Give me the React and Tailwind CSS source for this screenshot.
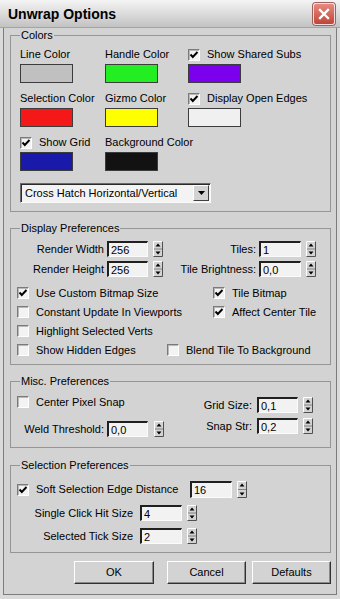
import React from "react";

function Spinner({ h = 16, className = "" }) {
  return (
    <svg width="10" height={h} viewBox={`0 0 10 ${h}`} className={"shrink-0 " + className}>
      <rect x="0" y="0" width="10" height={h} fill="#d3d3d3" />
      <path d={`M0.5 ${h - 0.5} V0.5 H9.5`} stroke="#ffffff" fill="none" />
      <path d={`M9.5 0.5 V${h - 0.5} H0.5`} stroke="#505050" fill="none" />
      <line x1="1" y1={h / 2} x2="9" y2={h / 2} stroke="#808080" />
      <path d="M5 2.5 L7.5 5.5 H2.5Z" fill="#000" />
      <path d={`M5 ${h - 2.5} L7.5 ${h - 5.5} H2.5Z`} fill="#000" />
    </svg>
  );
}

function Field({ value, className = "" }) {
  return (
    <div
      className={
        "shrink-0 flex items-center bg-[#f2f2f2] border-t-2 border-l-2 border-t-[#202020] border-l-[#202020] border-r border-b border-r-[#fbfbfb] border-b-[#fbfbfb] pl-[2px] leading-[12px] " +
        className
      }
    >
      {value}
    </div>
  );
}

function Check({ checked }) {
  return (
    <div className="w-[12px] h-[12px] shrink-0 bg-[#f3f3f3] border-t border-l border-t-[#7a7a7a] border-l-[#7a7a7a] border-r border-b border-r-[#ffffff] border-b-[#ffffff] shadow-[inset_1px_1px_0_#b8b8b8] flex items-center justify-center">
      {checked && (
        <svg width="10" height="10" viewBox="0 0 10 10">
          <path d="M1.5 4.5 L3.8 7 L8.5 2" stroke="#000" strokeWidth="1.9" fill="none" />
        </svg>
      )}
    </div>
  );
}

function CheckLabel({ checked, label, className = "" }) {
  return (
    <div className={"flex items-center gap-[7px] shrink-0 leading-[13px] " + className}>
      <Check checked={checked} />
      <span className="whitespace-nowrap">{label}</span>
    </div>
  );
}

function Swatch({ className }) {
  return <div className={"w-[53px] h-[19px] border border-[#3c3c3c] " + className} />;
}

function ColorCell({ label, swatch, check }) {
  return (
    <div className="flex flex-col gap-[3px]">
      <div className="h-[13px] flex items-center leading-[13px] whitespace-nowrap">
        {check !== undefined ? <CheckLabel checked={check} label={label} /> : label}
      </div>
      {swatch && <Swatch className={swatch} />}
    </div>
  );
}

function Button({ children, className = "" }) {
  return (
    <div
      className={
        "h-[23px] flex items-center justify-center bg-[#d3d3d3] border-t border-l border-t-[#ffffff] border-l-[#ffffff] border-r border-b border-r-[#303030] border-b-[#303030] shadow-[inset_-1px_-1px_0_#8a8a8a] " +
        className
      }
    >
      {children}
    </div>
  );
}

function Group({ title, className = "", children }) {
  return (
    <fieldset className={"ml-[6px] mr-[5px] border border-[#959595] min-w-0 " + className}>
      <legend className="ml-[9px] px-[1px] leading-[13px]">{title}</legend>
      {children}
    </fieldset>
  );
}

export default function App() {
  return (
    <div className="w-[340px] h-[599px] flex flex-col bg-[#dadada] font-['Liberation_Sans',Arial,sans-serif] text-[11px] text-black overflow-hidden">
      <div className="h-[28px] shrink-0 flex items-center justify-between pl-[8px] pr-[5px] bg-gradient-to-b from-[#f4f4f4] via-[#dcdcdc] to-[#c2c2c2] border-b border-[#a4a4a4]">
        <span className="font-bold text-[14px] leading-[16px]">Unwrap Options</span>
        <div className="w-[22px] h-[22px] rounded-[3px] border border-[#f4dcdc] bg-gradient-to-b from-[#e68a80] to-[#bf4438] flex items-center justify-center shadow-[0_0_0_1px_#a06060]">
          <svg width="12" height="12" viewBox="0 0 12 12">
            <path d="M2 2L10 10M10 2L2 10" stroke="#ffffff" strokeWidth="2.3" strokeLinecap="square" />
          </svg>
        </div>
      </div>

      <div className="flex-1 mx-[3px] mb-[4px] border-x border-b border-[#7c7c7c] bg-[#d3d3d3] flex flex-col">
        <Group title="Colors" className="mt-[1px]">
          <div className="pl-[9px] pt-[6px] pb-[8px]">
            <div className="grid grid-cols-[85px_83px_1fr] gap-y-[9px]">
              <ColorCell label="Line Color" swatch="bg-[#c0c0c0]" />
              <ColorCell label="Handle Color" swatch="bg-[#22ee22]" />
              <ColorCell label="Show Shared Subs" check={true} swatch="bg-[#7a00ee]" />
              <ColorCell label="Selection Color" swatch="bg-[#f41818]" />
              <ColorCell label="Gizmo Color" swatch="bg-[#ffff00]" />
              <ColorCell label="Display Open Edges" check={true} swatch="bg-[#f0f0f0]" />
              <ColorCell label="Show Grid" check={true} swatch="bg-[#1a1aaa]" />
              <ColorCell label="Background Color" swatch="bg-[#121212]" />
              <div />
            </div>
            <div className="mt-[12px] w-[191px] h-[20px] flex items-center bg-[#f3f3f3] border-t border-l border-t-[#6a6a6a] border-l-[#6a6a6a] border-r border-b border-r-[#fafafa] border-b-[#fafafa] shadow-[inset_1px_1px_0_#2a2a2a]">
              <span className="flex-1 pl-[4px] leading-[13px] whitespace-nowrap">Cross Hatch Horizontal/Vertical</span>
              <div className="w-[16px] h-[16px] mr-[1px] bg-[#d3d3d3] border-t border-l border-t-[#ffffff] border-l-[#ffffff] border-r border-b border-r-[#404040] border-b-[#404040] flex items-center justify-center">
                <svg width="7" height="4" viewBox="0 0 7 4">
                  <path d="M0 0H7L3.5 4Z" fill="#000" />
                </svg>
              </div>
            </div>
          </div>
        </Group>

        <Group title="Display Preferences" className="mt-[10px]">
          <div className="pt-[6px] pb-[7px]">
            <div className="flex items-center h-[16px]">
              <span className="w-[93px] text-right whitespace-nowrap">Render Width</span>
              <Field className="ml-[3px] w-[41px] h-[16px]" value="256" />
              <Spinner className="ml-[5px]" />
              <span className="w-[93px] text-right whitespace-nowrap">Tiles:</span>
              <Field className="ml-[3px] w-[42px] h-[16px]" value="1" />
              <Spinner className="ml-[5px]" />
            </div>
            <div className="flex items-center h-[16px] mt-[4px]">
              <span className="w-[93px] text-right whitespace-nowrap">Render Height</span>
              <Field className="ml-[3px] w-[41px] h-[16px]" value="256" />
              <Spinner className="ml-[5px]" />
              <span className="w-[93px] text-right whitespace-nowrap">Tile Brightness:</span>
              <Field className="ml-[3px] w-[42px] h-[16px]" value="0,0" />
              <Spinner className="ml-[5px]" />
            </div>
            <div className="flex flex-col gap-[5px] mt-[9px] pl-[6px]">
              <div className="flex items-center h-[14px]">
                <CheckLabel className="w-[196px]" checked label="Use Custom Bitmap Size" />
                <CheckLabel checked label="Tile Bitmap" />
              </div>
              <div className="flex items-center h-[14px]">
                <CheckLabel className="w-[196px]" label="Constant Update In Viewports" />
                <CheckLabel checked label="Affect Center Tile" />
              </div>
              <div className="flex items-center h-[14px]">
                <CheckLabel label="Highlight Selected Verts" />
              </div>
              <div className="flex items-center h-[14px]">
                <CheckLabel className="w-[150px]" label="Show Hidden Edges" />
                <CheckLabel label="Blend Tile To Background" />
              </div>
            </div>
          </div>
        </Group>

        <Group title="Misc. Preferences" className="mt-[10px]">
          <div className="flex pb-[10px]">
            <div className="w-[155px] flex flex-col">
              <div className="pt-[7px] pl-[6px] h-[21px] flex items-end">
                <div className="h-[14px] flex items-center">
                  <CheckLabel label="Center Pixel Snap" />
                </div>
              </div>
              <div className="mt-[12px] flex items-center h-[16px]">
                <span className="w-[93px] text-right whitespace-nowrap">Weld Threshold:</span>
                <Field className="ml-[3px] w-[41px] h-[16px]" value="0,0" />
                <Spinner className="ml-[6px]" />
              </div>
            </div>
            <div className="flex flex-col pt-[9px]">
              <div className="flex items-center h-[16px]">
                <span className="w-[86px] text-right whitespace-nowrap">Grid Size:</span>
                <Field className="ml-[5px] w-[41px] h-[16px]" value="0,1" />
                <Spinner className="ml-[5px]" />
              </div>
              <div className="flex items-center h-[16px] mt-[5px]">
                <span className="w-[86px] text-right whitespace-nowrap">Snap Str:</span>
                <Field className="ml-[5px] w-[41px] h-[16px]" value="0,2" />
                <Spinner className="ml-[5px]" />
              </div>
            </div>
          </div>
        </Group>

        <Group title="Selection Preferences" className="mt-[11px]">
          <div className="pt-[9px] pb-[8px]">
            <div className="flex items-center h-[17px] pl-[6px]">
              <CheckLabel className="w-[173px]" checked label="Soft Selection Edge Distance" />
              <Field className="w-[42px] h-[17px]" value="16" />
              <Spinner h={17} className="ml-[5px]" />
            </div>
            <div className="flex items-center h-[16px] mt-[7px]">
              <span className="w-[122px] text-right whitespace-nowrap">Single Click Hit Size</span>
              <Field className="ml-[7px] w-[42px] h-[16px]" value="4" />
              <Spinner className="ml-[5px]" />
            </div>
            <div className="flex items-center h-[16px] mt-[7px]">
              <span className="w-[122px] text-right whitespace-nowrap">Selected Tick Size</span>
              <Field className="ml-[7px] w-[42px] h-[16px]" value="2" />
              <Spinner className="ml-[5px]" />
            </div>
          </div>
        </Group>

        <div className="flex justify-end mr-[5px] mt-[8px]">
          <Button className="w-[80px]">OK</Button>
          <Button className="w-[79px] ml-[13px]">Cancel</Button>
          <Button className="w-[79px] ml-[6px]">Defaults</Button>
        </div>
      </div>
    </div>
  );
}
